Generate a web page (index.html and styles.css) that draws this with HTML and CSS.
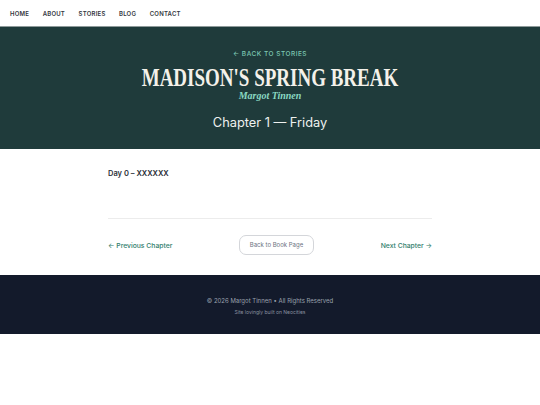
FILE: index.html
```html
<!DOCTYPE html>
<html lang="en">
<head>
<meta charset="utf-8">
<title>Madison's Spring Break — Chapter 1</title>
<link rel="stylesheet" href="styles.css">
</head>
<body>
<nav class="topnav">
  <a href="#">Home</a>
  <a href="#">About</a>
  <a href="#">Stories</a>
  <a href="#">Blog</a>
  <a href="#">Contact</a>
</nav>
<header class="hero">
  <a class="back" href="#">← Back to Stories</a>
  <h1 class="title"><span>MADISON'S SPRING BREAK</span></h1>
  <p class="author">Margot Tinnen</p>
  <h2 class="chapter">Chapter 1 — Friday</h2>
</header>
<main class="content">
  <p class="day">Day 0 – XXXXXX</p>
  <hr class="rule">
  <div class="chapnav">
    <a class="chaplink" href="#">← Previous Chapter</a>
    <a class="bookbtn" href="#">Back to Book Page</a>
    <a class="chaplink" href="#">Next Chapter →</a>
  </div>
</main>
<footer class="footer">
  <p class="copy">© 2026 Margot Tinnen • All Rights Reserved</p>
  <p class="built">Site lovingly built on Neocities</p>
</footer>
</body>
</html>
```

FILE: styles.css
```css
html, body {
  margin: 0;
  padding: 0;
  background: #ffffff;
}
body {
  font-family: Inter, "Liberation Sans", sans-serif;
}
a { text-decoration: none; }

.topnav {
  display: flex;
  align-items: center;
  gap: 13.5px;
  height: 26px;
  padding: 0 10px;
  border-bottom: 1px solid #8e9a9a;
}
.topnav a {
  font-size: 6px;
  font-weight: 600;
  letter-spacing: 0.22px;
  text-transform: uppercase;
  color: #33363d;
}

.hero {
  background: #1f3b3b;
  height: 122px;
  display: flex;
  flex-direction: column;
  align-items: center;
  box-sizing: border-box;
  padding-top: 23px;
}
.back {
  font-size: 6.5px;
  font-weight: 500;
  letter-spacing: 0.5px;
  text-transform: uppercase;
  color: #7cc7b2;
  line-height: 8px;
}
.title {
  margin: 10px 0 0;
  font-family: "Liberation Serif", serif;
  font-weight: 700;
  font-size: 19px;
  line-height: 20px;
  color: #f4f1ea;
  letter-spacing: 0;
}
.title span {
  display: inline-block;
  transform: scale(1, 1.3);
}
.author {
  margin: 2px 0 0;
  font-family: "Liberation Serif", serif;
  font-style: italic;
  font-weight: 700;
  font-size: 10px;
  line-height: 11px;
  color: #8ad8c2;
}
.chapter {
  margin: 14px 0 0;
  font-weight: 400;
  font-size: 12.8px;
  line-height: 16px;
  color: #eef1ef;
}

.content {
  width: 324px;
  margin: 0 auto;
  padding-top: 20px;
  height: 126px;
  box-sizing: border-box;
}
.day {
  margin: 0;
  font-size: 7.5px;
  font-weight: 600;
  color: #2b2f38;
  line-height: 10px;
}
.rule {
  margin: 39px 0 0;
  border: 0;
  border-top: 1px solid #ececec;
}
.chapnav {
  margin-top: 16px;
  display: flex;
  justify-content: space-between;
  align-items: center;
}
.chaplink {
  font-size: 6.8px;
  font-weight: 500;
  color: #2f7d6c;
}
.bookbtn {
  display: block;
  width: 75px;
  height: 20px;
  box-sizing: border-box;
  border: 1px solid #d4d6da;
  border-radius: 7px;
  font-size: 6px;
  line-height: 18px;
  text-align: center;
  color: #6b7280;
}

.footer {
  background: #131a2b;
  height: 59px;
  box-sizing: border-box;
  padding-top: 22px;
  text-align: center;
}
.copy {
  margin: 0;
  font-size: 6px;
  line-height: 8px;
  color: #9aa1ad;
}
.built {
  margin: 4px 0 0;
  font-size: 5px;
  line-height: 7px;
  color: #8a91a0;
}
```
